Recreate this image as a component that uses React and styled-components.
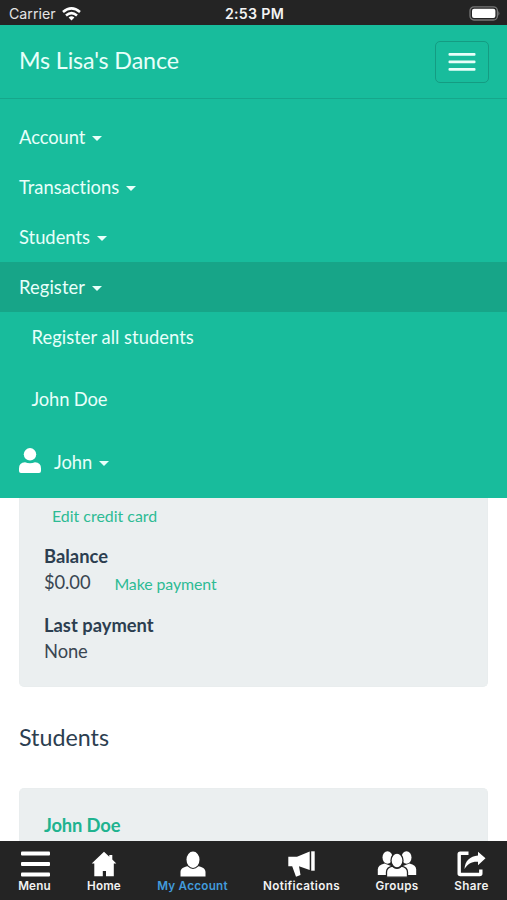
import React from "react";
import styled, { createGlobalStyle } from "styled-components";

const GlobalStyle = createGlobalStyle`
  * { box-sizing: border-box; }
  html, body { margin: 0; padding: 0; background: #fff; overflow: hidden; }
`;

const Screen = styled.div`
  display: flex;
  flex-direction: column;
  width: 507px;
  height: 900px;
  overflow: hidden;
  background: #fff;
  color: #2c3e50;
  font-family: Lato, sans-serif;
  font-size: 18.37px;
  font-variant-ligatures: none;
  line-height: 26px;
`;

const StatusBar = styled.header`
  display: grid;
  grid-template-columns: 1fr auto 1fr;
  align-items: center;
  flex: 0 0 25px;
  padding: 2px 7px 0 9px;
  background: #242424;
  color: #e4e4e4;
  font: 400 14.2px/22px Inter, sans-serif;
`;

const Carrier = styled.div`
  display: flex;
  align-items: center;
  gap: 6px;
`;

const Clock = styled.div`
  color: #f4f4f4;
  font-weight: 600;
  letter-spacing: 0.3px;
`;

const BatterySlot = styled.div`
  display: flex;
  justify-content: flex-end;
`;

const Nav = styled.nav`
  flex: 0 0 473px;
  background: #18bc9c;
  color: #e8fffa;
`;

const NavHeader = styled.div`
  display: flex;
  align-items: center;
  justify-content: space-between;
  height: 74px;
  padding: 0 18px 0 19px;
  border-bottom: 1px solid #16a78b;
`;

const Brand = styled.div`
  font-size: 23.27px;
  letter-spacing: -0.14px;
  line-height: 30px;
  padding-bottom: 3px;
`;

const Toggle = styled.button`
  display: flex;
  align-items: center;
  justify-content: center;
  width: 54px;
  height: 42px;
  padding: 0;
  border: 1px solid #149c82;
  border-radius: 5px;
  background: transparent;
`;

const NavList = styled.div`
  padding-top: 13px;
`;

const NavItem = styled.div`
  display: flex;
  align-items: center;
  height: ${(p) => p.$height || 50}px;
  padding: 0 ${(p) => (p.$nested ? 31.5 : 19)}px;
  background: ${(p) => (p.$active ? "#17a588" : "transparent")};
`;

const NavName = styled.span`
  letter-spacing: ${(p) => p.$tracking || 0}px;
`;

const Caret = styled.span`
  width: 0;
  height: 0;
  margin: 3px 0 0 6.5px;
  border-top: 5px solid #e8fffa;
  border-left: 5px solid transparent;
  border-right: 5px solid transparent;
`;

const UserIcon = styled.svg`
  width: 22px;
  height: 25px;
  margin: 0 13px 3px 0;
`;

const Content = styled.main`
  flex: 1 1 0;
  min-height: 0;
  overflow: hidden;
  padding: 0 19px;
`;

const Well = styled.section`
  height: ${(p) => p.$height}px;
  padding: ${(p) => p.$top}px 24px 0;
  border: 1px solid #e9edee;
  border-${(p) => (p.$open ? "top" : "bottom")}-width: 0;
  border-radius: ${(p) => (p.$open ? "0 0 5px 5px" : "5px 5px 0 0")};
  background: #ebeff0;
`;

const SmallLink = styled.a`
  color: #2dbb94;
  font-size: 15.92px;
  line-height: 24px;
`;

const CardLink = styled(SmallLink)`
  display: block;
  padding-left: 8px;
`;

const Field = styled.div`
  margin-top: ${(p) => p.$gap}px;
`;

const Label = styled.div`
  font-weight: 700;
`;

const Value = styled.div`
  display: flex;
  align-items: baseline;
  gap: 24px;
  color: #3a4652;
  letter-spacing: -0.1px;
`;

const PaymentLink = styled(SmallLink)`
  transform: translateY(1px);
`;

const SectionTitle = styled.h2`
  margin: 35px 0;
  font-size: 23.27px;
  font-weight: 400;
  line-height: 31px;
`;

const StudentLink = styled.a`
  color: #20b38f;
  font-weight: 700;
  letter-spacing: -0.15px;
`;

const TabBar = styled.footer`
  display: flex;
  justify-content: space-between;
  flex: 0 0 59px;
  padding: 9px 18px 0;
  background: #242424;
`;

const Tab = styled.div`
  display: flex;
  flex-direction: column;
  align-items: center;
  width: ${(p) => p.$width}px;
  color: ${(p) => (p.$active ? "#429bdb" : "#f2f2f2")};
  font: 600 11.7px/16px Inter, sans-serif;
  letter-spacing: ${(p) => p.$tracking ?? 0.15}px;
  white-space: nowrap;

  svg {
    display: block;
    flex: 0 0 28px;
    fill: #fff;
  }
`;

const Hamburger = () => (
  <svg width="30" height="28" viewBox="0 0 30 28">
    <rect x="1" y="1.5" width="29" height="4" rx="1" />
    <rect x="1" y="12" width="29" height="4" rx="1" />
    <rect x="1" y="22.5" width="29" height="4" rx="1" />
  </svg>
);

const House = () => (
  <svg width="26" height="28" viewBox="0 0 26 28">
    <path d="M13 1.8 18.3 6.8V5H21.3V9.6L25.3 13.5H22.8V26.3H15V21H11.8V26.3H3.3V13.5H.7Z" />
  </svg>
);

const Person = () => (
  <svg width="26" height="28" viewBox="0 0 26 28">
    <ellipse cx="13" cy="9.7" rx="6.5" ry="8.2" />
    <path d="M.5 26.5V22C.5 18.5 4 17 7.5 16.3Q13 21.5 18.5 16.3C22 17 25.5 18.5 25.5 22V26.5Z" />
  </svg>
);

const Megaphone = () => (
  <svg width="27" height="28" viewBox="0 0 27 28">
    <path d="M.3 6.7H9L21.7 1.6V20L11 16.3L12.5 25L8 26.7L4.2 16.3H.3Z" />
    <path d="M23.2 1.3H26.7V20.7H23.2Z" />
  </svg>
);

const People = () => (
  <svg width="40" height="28" viewBox="0 0 40 28">
    <ellipse cx="10.5" cy="7.5" rx="5" ry="6.2" />
    <ellipse cx="29.5" cy="7.5" rx="5" ry="6.2" />
    <path d="M.8 25V19.5Q.8 15 7.5 13.5L14 16V25Z" />
    <path d="M39.2 25V19.5Q39.2 15 32.5 13.5L26 16V25Z" />
    <g stroke="#242424" strokeWidth="1.3">
      <path d="M9.5 27.2V22C9.5 18.5 12 17 15.5 16.2Q20 20.2 24.5 16.2C28 17 30.5 18.5 30.5 22V27.2Z" />
      <ellipse cx="20" cy="10.5" rx="6" ry="7.4" />
    </g>
  </svg>
);

const ShareArrow = () => (
  <svg width="29" height="28" viewBox="0 0 29 28">
    <path
      d="M11.5 3.2H3.2Q2.2 3.2 2.2 4.2V23.5Q2.2 24.5 3.2 24.5H22.8Q23.8 24.5 23.8 23.5V19.5"
      fill="none"
      stroke="#fff"
      strokeWidth="3.4"
    />
    <path d="M21 1.8 28.5 8.3 21 15.3V11.8C14.5 11.5 11 13.5 7.5 19C8 11 13 6 21 5.5Z" />
  </svg>
);

const ShareGlyph = styled.span`
  display: block;
  svg path:first-child { fill: none; }
`;

const Share = () => (
  <ShareGlyph>
    <ShareArrow />
  </ShareGlyph>
);

const tabs = [
  { label: "Menu", width: 33, Icon: Hamburger },
  { label: "Home", width: 36, Icon: House },
  { label: "My Account", width: 71, Icon: Person, active: true, tracking: 0.25 },
  { label: "Notifications", width: 77, Icon: Megaphone, tracking: 0.35 },
  { label: "Groups", width: 44, Icon: People, tracking: 0.3 },
  { label: "Share", width: 35, Icon: Share, tracking: 0.3 },
];

export default function App() {
  return (
    <Screen>
      <GlobalStyle />
      <StatusBar>
        <Carrier>
          Carrier
          <svg width="19" height="14" viewBox="0 0 19 14" fill="none" stroke="#fff" strokeWidth="2.6">
            <path d="M1 5Q9.5-2.2 18 5" />
            <path d="M4 8.4Q9.5 3.8 15 8.4" />
            <path d="M6.6 10.5Q9.5 8.1 12.4 10.5L9.5 13.5Z" fill="#fff" stroke="none" />
          </svg>
        </Carrier>
        <Clock>2:53 PM</Clock>
        <BatterySlot>
          <svg width="31" height="15" viewBox="0 0 31 15">
            <rect x="1" y=".8" width="27.4" height="13.2" rx="4" fill="none" stroke="#777" strokeWidth="1.3" />
            <rect x="3" y="2.8" width="23.4" height="9.2" rx="2" fill="#fff" />
            <path d="M29.4 5Q31.4 7.4 29.4 9.8Z" fill="#777" />
          </svg>
        </BatterySlot>
      </StatusBar>

      <Nav>
        <NavHeader>
          <Brand>Ms Lisa's Dance</Brand>
          <Toggle aria-label="Toggle navigation">
            <svg width="28" height="20" viewBox="0 0 28 20" fill="#e8fffa">
              <rect x=".5" y="1" width="27" height="2.7" rx="1" />
              <rect x=".5" y="8.5" width="27" height="2.7" rx="1" />
              <rect x=".5" y="16" width="27" height="2.7" rx="1" />
            </svg>
          </Toggle>
        </NavHeader>
        <NavList>
          <NavItem><NavName $tracking={-0.05}>Account</NavName><Caret /></NavItem>
          <NavItem><NavName>Transactions</NavName><Caret /></NavItem>
          <NavItem><NavName>Students</NavName><Caret /></NavItem>
          <NavItem $active><NavName $tracking={0.08}>Register</NavName><Caret /></NavItem>
          <NavItem $nested><NavName $tracking={0.03}>Register all students</NavName></NavItem>
          <NavItem $nested $height={74}><NavName $tracking={-0.15}>John Doe</NavName></NavItem>
          <NavItem $height={52}>
            <UserIcon viewBox="0 0 22 25" fill="#fff">
              <circle cx="11" cy="6.3" r="6.2" />
              <path d="M0 23V20.5Q0 14.5 6 14.3Q11 16 16 14.3Q22 14.5 22 20.5V23Q22 25 20 25H2Q0 25 0 23Z" />
            </UserIcon>
            <NavName>John</NavName><Caret />
          </NavItem>
        </NavList>
      </Nav>

      <Content>
        <Well $open $height={189} $top={6}>
          <CardLink>Edit credit card</CardLink>
          <Field $gap={15}>
            <Label>Balance</Label>
            <Value>$0.00 <PaymentLink>Make payment</PaymentLink></Value>
          </Field>
          <Field $gap={17}>
            <Label>Last payment</Label>
            <Value>None</Value>
          </Field>
        </Well>
        <SectionTitle>Students</SectionTitle>
        <Well $height={80} $top={23}>
          <StudentLink>John Doe</StudentLink>
        </Well>
      </Content>

      <TabBar>
        {tabs.map(({ label, width, Icon, active, tracking }) => (
          <Tab key={label} $width={width} $active={active} $tracking={tracking}>
            <Icon />
            {label}
          </Tab>
        ))}
      </TabBar>
    </Screen>
  );
}
